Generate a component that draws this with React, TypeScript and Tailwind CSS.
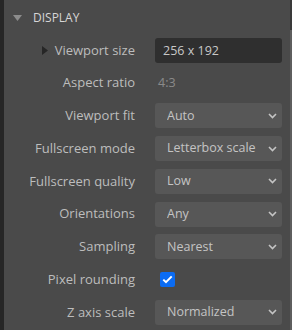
import { useState } from "react";

type Field =
  | { kind: "input"; label: string; value: string; expandable?: boolean }
  | { kind: "text"; label: string; value: string }
  | { kind: "select"; label: string; value: string; options: string[] }
  | { kind: "check"; label: string; value: boolean };

const fields: Field[] = [
  { kind: "input", label: "Viewport size", value: "256 x 192", expandable: true },
  { kind: "text", label: "Aspect ratio", value: "4:3" },
  { kind: "select", label: "Viewport fit", value: "Auto", options: ["Auto", "Off", "Crop", "Scale outer"] },
  { kind: "select", label: "Fullscreen mode", value: "Letterbox scale", options: ["Off", "Crop", "Letterbox scale", "Scale outer"] },
  { kind: "select", label: "Fullscreen quality", value: "Low", options: ["Low", "High"] },
  { kind: "select", label: "Orientations", value: "Any", options: ["Any", "Portrait", "Landscape"] },
  { kind: "select", label: "Sampling", value: "Nearest", options: ["Nearest", "Linear", "Trilinear"] },
  { kind: "check", label: "Pixel rounding", value: true },
  { kind: "select", label: "Z axis scale", value: "Normalized", options: ["Normalized", "Regular"] },
];

function Chevron() {
  return (
    <svg width="9" height="6" viewBox="0 0 9 6" className="pointer-events-none absolute right-[5px] top-1/2 -translate-y-1/2">
      <path d="M1 1 L4.5 4.5 L8 1" fill="none" stroke="#c4c4c4" strokeWidth="1.6" />
    </svg>
  );
}

function Control({ f }: { f: Field }) {
  const [val, setVal] = useState(f.value);

  if (f.kind === "input") {
    return (
      <input
        value={val as string}
        onChange={(e) => setVal(e.target.value)}
        className="h-[25px] w-full rounded-[3px] bg-[#2f2f2f] px-[8px] text-[#c8c8c8] outline-none"
      />
    );
  }
  if (f.kind === "text") {
    return <span className="pl-[3px] text-[#8a8a8a]">{f.value}</span>;
  }
  if (f.kind === "check") {
    return (
      <button
        type="button"
        onClick={() => setVal(!val)}
        className={`ml-[5px] flex h-[15px] w-[15px] items-center justify-center rounded-[2px] ${val ? "bg-[#0b6cf3]" : "bg-[#2f2f2f]"}`}
      >
        {val && (
          <svg width="11" height="9" viewBox="0 0 11 9">
            <path d="M1.3 4.6 L4 7.2 L9.7 1.4" fill="none" stroke="#fff" strokeWidth="2" />
          </svg>
        )}
      </button>
    );
  }
  return (
    <div className="relative w-full">
      <select
        value={val as string}
        onChange={(e) => setVal(e.target.value)}
        className="h-[25px] w-full appearance-none rounded-[3px] bg-[#575757] pl-[12px] text-[#c4c4c4] outline-none"
      >
        {f.options.map((o) => (
          <option key={o}>{o}</option>
        ))}
      </select>
      <Chevron />
    </div>
  );
}

export default function App() {
  return (
    <div className="flex h-[330px] w-[292px] overflow-hidden bg-[#4a4a4a] font-['Open_Sans',sans-serif] text-[12.5px]">
      <div className="w-[4px] shrink-0 bg-[#262626]" />
      <div className="flex-1">
        <div className="flex h-[34px] items-center pl-[9px] pt-[2px]">
          <svg width="9" height="6" viewBox="0 0 9 6" className="mr-[11px]">
            <path d="M0 0 H9 L4.5 6 Z" fill="#8c8c8c" />
          </svg>
          <span className="text-[12px] text-[#d6d6d6]">DISPLAY</span>
        </div>
        {fields.map((f) => (
          <div key={f.label} className="grid h-[32.75px] grid-cols-[131px_127px] items-center gap-x-[20px]">
            <div className="flex items-center justify-end text-[13px] text-[#bdbdbd]">
              {f.kind === "input" && f.expandable && (
                <svg width="6" height="9" viewBox="0 0 6 9" className="mr-auto ml-[38px]">
                  <path d="M0 0 L6 4.5 L0 9 Z" fill="#262626" />
                </svg>
              )}
              <span className="whitespace-nowrap">{f.label}</span>
            </div>
            <div className="flex items-center">
              <Control f={f} />
            </div>
          </div>
        ))}
      </div>
      <div className="flex w-[2px] shrink-0 flex-col">
        <div className="h-[30px] bg-[#3a3a3a]" />
        <div className="flex-1 bg-[#5e5e5e]" />
      </div>
    </div>
  );
}
